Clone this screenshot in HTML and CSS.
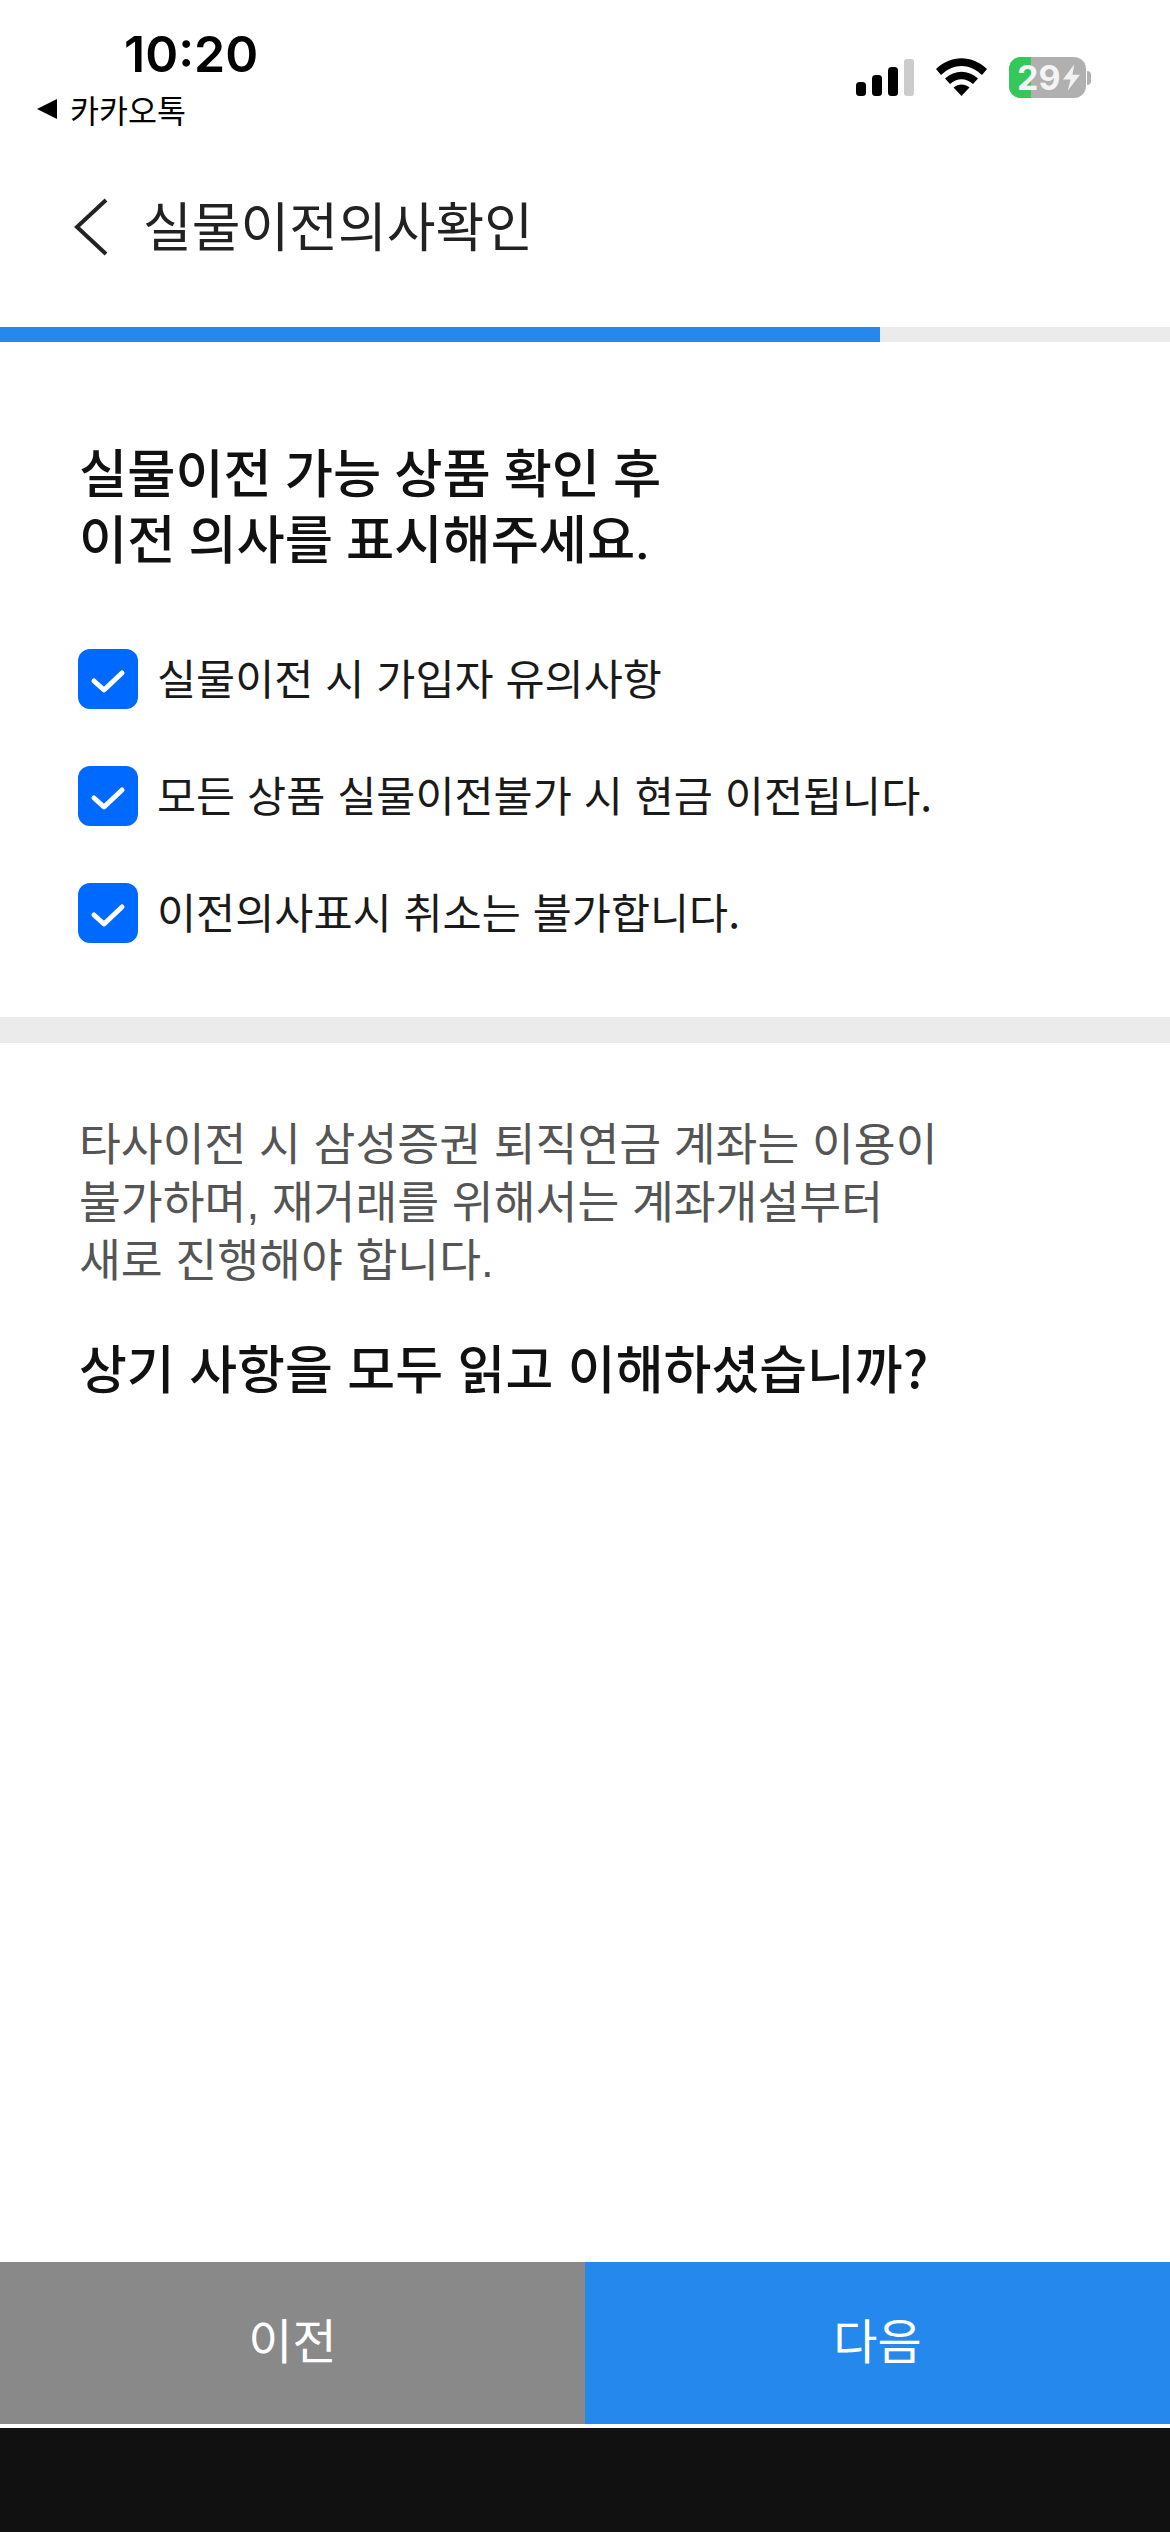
FILE: index.html
```html
<!DOCTYPE html>
<html lang="ko">
<head>
    <meta charset="UTF-8">
    <meta name="viewport" content="width=device-width, initial-scale=1.0">
    <title>실물이전의사확인</title>
    <link rel="stylesheet" href="styles.css">
</head>
<body>

<div id="screen">
    <div class="statusBar">
        <div class="statusLeft">
            <div class="clock">10:20</div>
            <div class="backApp"><span class="backArrow"></span>카카오톡</div>
        </div>
        <div class="statusRight">
            <svg class="signal" width="58" height="37" viewBox="0 0 58 37">
                <rect x="0" y="23" width="10" height="14" rx="3.5" fill="#000"/>
                <rect x="16" y="16" width="10" height="21" rx="3.5" fill="#000"/>
                <rect x="32" y="8" width="10" height="29" rx="3.5" fill="#000"/>
                <rect x="48" y="0" width="10" height="37" rx="3" fill="#ccc"/>
            </svg>
            <svg class="wifi" width="51" height="38" viewBox="0 0 51 38">
                <path d="M0 11 C15 -3.500 36 -3.500 51 11 L46 17 C33 5 18 5 5 17 Z" fill="#000"/>
                <path d="M9 20.500 C19 11.500 32 11.500 42 20.500 L37 26 C30 19.500 21 19.500 14 26 Z" fill="#000"/>
                <path d="M17.500 29.500 C22.500 25.500 28.500 25.500 33.500 29.500 L25.500 38 Z" fill="#000"/>
            </svg>
            <div class="battery">
                <div class="batteryBody">
                    <div class="batteryFill"></div>
                    <span class="batteryText">29</span>
                    <svg class="bolt" width="17" height="27" viewBox="0 0 18 28">
                        <path d="M12 0 L0 16 L8 16 L5 28 L18 11 L10 11 Z" fill="#f2f2f2"/>
                    </svg>
                </div>
                <div class="batteryCap"></div>
            </div>
        </div>
    </div>

    <div class="header">
        <svg class="backIcon" width="36" height="58" viewBox="0 0 36 58">
            <path d="M33 2 L4 29 L33 56" fill="none" stroke="#222" stroke-width="4"/>
        </svg>
        <h1>실물이전의사확인</h1>
    </div>

    <div class="progress"><div class="progressBar"></div></div>

    <div class="section checks">
        <h2>실물이전 가능 상품 확인 후<br>이전 의사를 표시해주세요.</h2>
        <ul class="checkList">
            <li>
                <svg class="check" width="60" height="60" viewBox="0 0 60 60">
                    <rect width="60" height="60" rx="12" fill="#0069ff"/>
                    <path d="M16 32 L26 41 L44 24" fill="none" stroke="#fff" stroke-width="5" stroke-linecap="round" stroke-linejoin="round"/>
                </svg>
                <span class="checkText">실물이전 시 가입자 유의사항</span>
            </li>
            <li>
                <svg class="check" width="60" height="60" viewBox="0 0 60 60">
                    <rect width="60" height="60" rx="12" fill="#0069ff"/>
                    <path d="M16 32 L26 41 L44 24" fill="none" stroke="#fff" stroke-width="5" stroke-linecap="round" stroke-linejoin="round"/>
                </svg>
                <span class="checkText">모든 상품 실물이전불가 시 현금 이전됩니다.</span>
            </li>
            <li>
                <svg class="check" width="60" height="60" viewBox="0 0 60 60">
                    <rect width="60" height="60" rx="12" fill="#0069ff"/>
                    <path d="M16 32 L26 41 L44 24" fill="none" stroke="#fff" stroke-width="5" stroke-linecap="round" stroke-linejoin="round"/>
                </svg>
                <span class="checkText">이전의사표시 취소는 불가합니다.</span>
            </li>
        </ul>
    </div>

    <div class="divider"></div>

    <div class="section notice">
        <p>타사이전 시 삼성증권 퇴직연금 계좌는 이용이<br>불가하며, 재거래를 위해서는 계좌개설부터<br>새로 진행해야 합니다.</p>
        <h3>상기 사항을 모두 읽고 이해하셨습니까?</h3>
    </div>

    <div class="buttons">
        <button type="button" class="prev">이전</button>
        <button type="button" class="next">다음</button>
    </div>
    <div class="bottomBar"></div>
</div>

</body>
</html>
```

FILE: styles.css
```css
* {
    box-sizing: border-box;
}

html, body {
    margin: 0;
    padding: 0;
    background-color: white;
}

body {
    font-family: "Noto Sans CJK KR", "Noto Sans", sans-serif;
    color: #111;
}

#screen {
    width: 1170px;
    height: 2532px;
    display: flex;
    flex-direction: column;
    overflow: hidden;
}

.statusBar {
    height: 140px;
    display: flex;
    justify-content: space-between;
}

.statusLeft {
    padding: 26px 0 0 37px;
}

.clock {
    font-family: Inter, sans-serif;
    font-weight: 600;
    font-size: 50px;
    line-height: 56px;
    margin-left: 87px;
    color: #000;
}

.backApp {
    display: flex;
    align-items: center;
    font-size: 31.5px;
    line-height: 40px;
    margin-top: 7px;
    color: #000;
}

.backArrow {
    width: 0;
    height: 0;
    border-top: 10px solid transparent;
    border-bottom: 10px solid transparent;
    border-right: 20px solid black;
    margin-right: 13px;
}

.statusRight {
    display: flex;
    align-items: flex-start;
    padding: 59px 0 0 0;
    margin-right: 79px;
}

.signal {
    margin-right: 22px;
}

.wifi {
    margin: -1px 22px 0 0;
}

.battery {
    display: flex;
    align-items: center;
    margin-top: -2px;
}

.batteryBody {
    position: relative;
    width: 77px;
    height: 41px;
    background-color: #b0b0b0;
    border-radius: 12px;
    overflow: hidden;
    display: flex;
    align-items: center;
    padding-left: 8px;
}

.batteryFill {
    position: absolute;
    left: 0;
    top: 0;
    bottom: 0;
    width: 22px;
    background-color: #34c759;
}

.batteryText {
    position: relative;
    font-family: Inter, sans-serif;
    font-weight: 700;
    font-size: 34px;
    color: #f4f4f4;
}

.bolt {
    position: relative;
    margin-left: 2px;
}

.batteryCap {
    width: 4px;
    height: 14px;
    background-color: #b0b0b0;
    border-radius: 0 6px 6px 0;
    margin-left: 1px;
}

.header {
    height: 187px;
    display: flex;
    align-items: flex-start;
    padding: 57px 0 0 73px;
}

.backIcon {
    margin-top: 1px;
}

.header h1 {
    margin: -3px 0 0 34px;
    font-size: 53px;
    font-weight: 400;
    line-height: 60px;
    color: #222;
}

.progress {
    height: 15px;
    background-color: #ebebeb;
}

.progressBar {
    width: 880px;
    height: 100%;
    background-color: #2588ec;
}

.section {
    padding: 0 79px;
}

.checks {
    height: 675px;
    padding-top: 100px;
}

.checks h2 {
    margin: 0;
    font-family: Roboto, "Noto Sans CJK KR", sans-serif;
    font-size: 52.4px;
    font-weight: 500;
    line-height: 66px;
    color: #111;
}

.checkList {
    list-style: none;
    margin: 75px 0 0 -1px;
    padding: 0;
}

.checkList li {
    display: flex;
    align-items: center;
    height: 60px;
    margin-bottom: 57px;
    font-size: 42.5px;
    color: #1a1a1a;
}

.check {
    margin-right: 19px;
    flex: none;
}

.checkText {
    margin-top: -5px;
}

.divider {
    height: 26px;
    background-color: #ebebeb;
}

.notice {
    flex: 1;
    padding-top: 74px;
}

.notice p {
    margin: 0;
    font-family: "Liberation Sans", "Noto Sans CJK KR", sans-serif;
    font-size: 45.5px;
    line-height: 58px;
    color: #555;
}

.notice h3 {
    margin: 42px 0 0 0;
    font-size: 52px;
    font-weight: 500;
    line-height: 68px;
}

.buttons {
    display: flex;
    height: 162px;
}

.buttons button {
    flex: 1;
    border: 0;
    padding: 0 0 10px 0;
    font-family: inherit;
    font-size: 48px;
    color: white;
}

.prev {
    background-color: #898989;
}

.next {
    background-color: #2588ec;
}

.bottomBar {
    height: 104px;
    margin-top: 4px;
    background-color: #111;
}
```
